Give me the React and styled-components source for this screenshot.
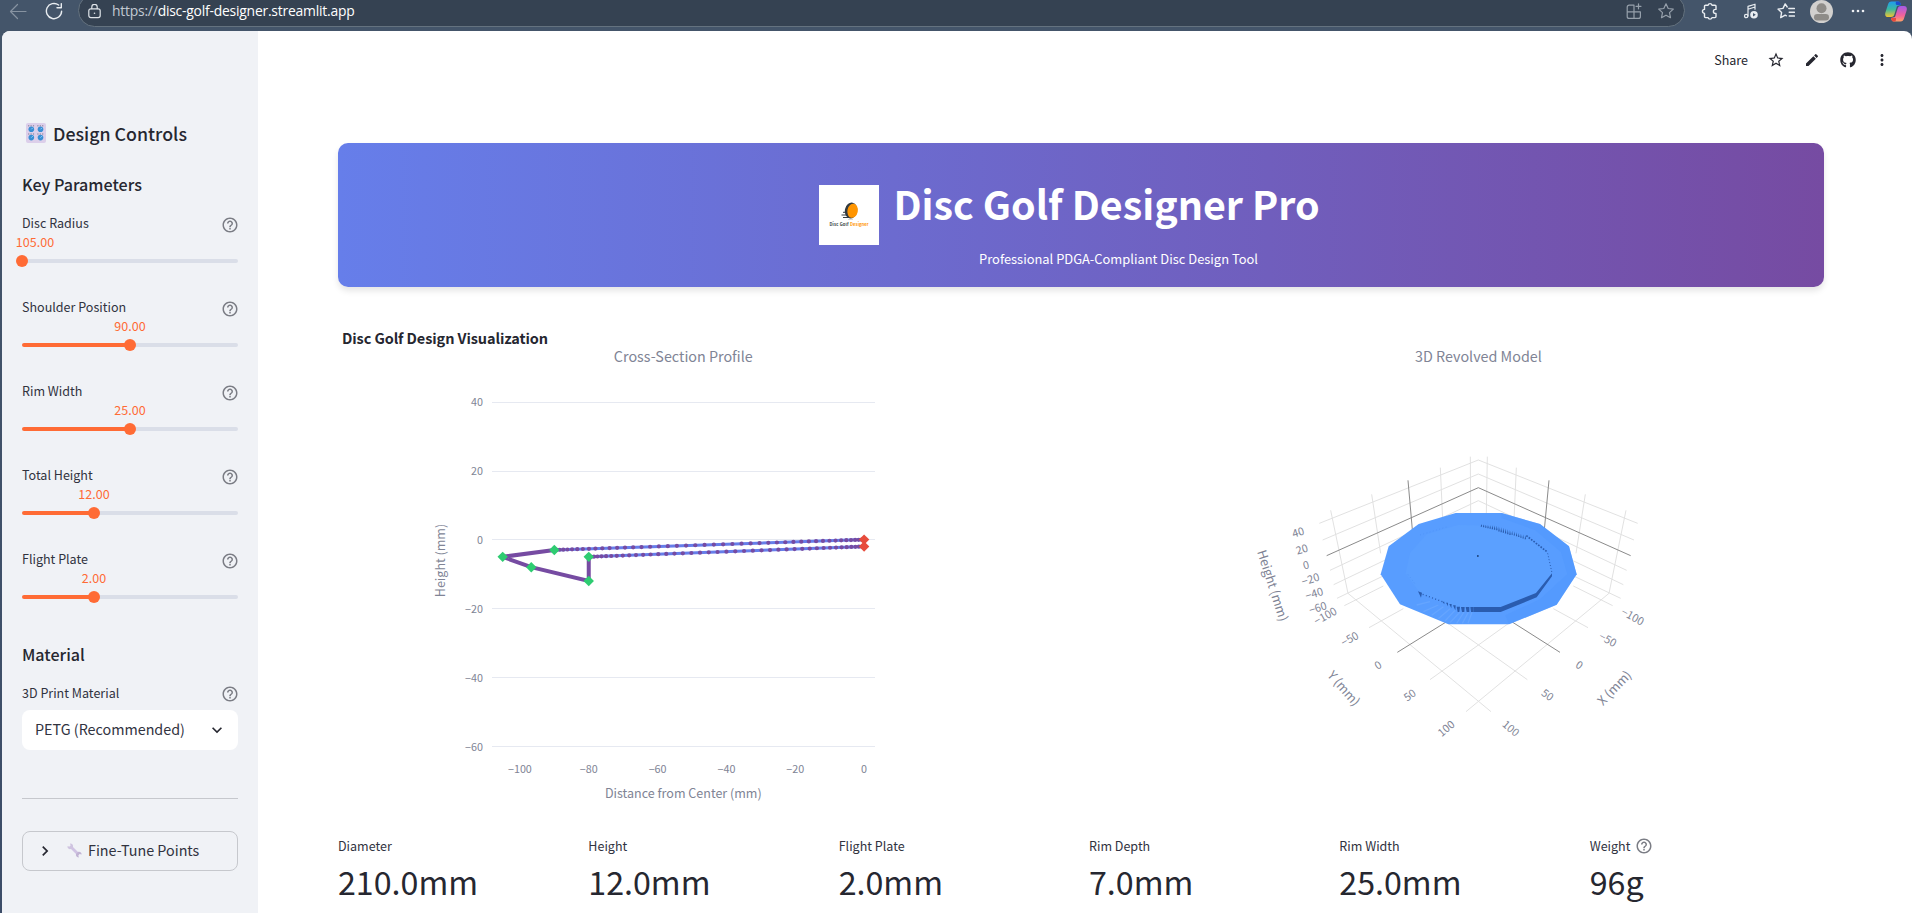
import React from "react";
import styled, { createGlobalStyle } from "styled-components";
import { FaGithub } from "react-icons/fa";
import { MdEdit, MdMoreVert, MdStarBorder, MdHelpOutline, MdExpandMore, MdChevronRight } from "react-icons/md";

const sans = `"Noto Sans CJK SC", "Open Sans", sans-serif`;

const GlobalStyle = createGlobalStyle`
  * { box-sizing: border-box; }
  html, body { margin: 0; height: 100%; overflow: hidden; background: #44556a; }
  body { font-family: ${sans}; color: #31333f; }
  svg { display: block; flex: none; }
`;

const Window = styled.div`
  width: 1912px;
  height: 913px;
  display: flex;
  flex-direction: column;
  overflow: hidden;
  background: linear-gradient(180deg, #44556a 0, #44556a 60px, #3c4d68 100%);
`;

/* ---------- browser chrome ---------- */
const Chrome = styled.div`
  height: 31px;
  flex: none;
  display: flex;
  align-items: flex-start;
  background: #44556a;
`;
const ChromeCell = styled.div`
  width: ${(p) => p.$w}px;
  height: 22px;
  margin-left: ${(p) => p.$ml || 0}px;
  flex: none;
  display: flex;
  align-items: center;
  justify-content: center;
`;
const AddressBar = styled.div`
  width: 1607px;
  height: 33px;
  margin-top: -6px;
  flex: none;
  display: flex;
  align-items: center;
  padding: 1px 9px 0 8px;
  border: 1px solid #64727f;
  border-radius: 17px;
  background: #354252;
`;
const Url = styled.div`
  flex: 1;
  margin-left: 10px;
  font: 13.9px/20px "Open Sans", sans-serif;
  letter-spacing: -0.22px;
  color: #fff;
  span { color: #c3cad2; }
`;
const ChromeDivider = styled.div`
  width: 1px;
  height: 16px;
  margin-top: 3px;
  background: #67788b;
`;
const Avatar = styled.div`
  width: 23px;
  height: 23px;
  border-radius: 50%;
  background: #d2d0ce;
  overflow: hidden;
  flex: none;
`;

/* ---------- page ---------- */
const Page = styled.div`
  flex: 1;
  min-height: 0;
  margin-left: 2px;
  display: flex;
  background: #fff;
  border-radius: 8px 8px 0 0;
  overflow: hidden;
`;
const Sidebar = styled.aside`
  width: 256px;
  flex: none;
  padding: 86px 20px 0;
  background: #f0f2f6;
`;
const PanelTitle = styled.h2`
  display: flex;
  align-items: center;
  gap: 7px;
  margin: 0 0 21px;
  padding-left: 4px;
  height: 32px;
  font-size: 17.8px;
  line-height: 32px;
  font-weight: 500;
  color: #262730;
`;
const SectionTitle = styled.h3`
  margin: 0;
  height: 28px;
  font-size: 16.1px;
  line-height: 28px;
  font-weight: 500;
  color: #262730;
`;
const FieldHead = styled.div`
  display: flex;
  align-items: center;
  justify-content: space-between;
  height: 20px;
  margin-top: ${(p) => p.$gap || 0}px;
  font-size: 12.54px;
  line-height: 20px;
  svg { margin: ${(p) => p.$drop}px -1px 0 0; }
`;
const SliderList = styled.div`
  height: 442px;
  padding-top: 15px;
`;
const SliderBox = styled.div`
  height: 84px;
`;
const SliderValue = styled.div`
  width: 60px;
  margin-left: ${(p) => 216 * p.$at - 30 + (p.$shift || 0)}px;
  height: 20px;
  margin-top: -1px;
  text-align: center;
  font-size: 12.54px;
  line-height: 20px;
  color: #ff6b35;
`;
const Track = styled.div`
  display: flex;
  align-items: center;
  height: 4px;
  margin-top: 7px;
  border-radius: 4px;
  background: linear-gradient(90deg, #ff6b35 ${(p) => p.$at * 100}%, #dadee8 ${(p) => p.$at * 100}%);
`;
const Thumb = styled.div`
  width: 12px;
  height: 12px;
  flex: none;
  margin-left: ${(p) => 216 * p.$at - 6}px;
  border-radius: 50%;
  background: #ff6b35;
`;
const Select = styled.div`
  display: flex;
  align-items: center;
  justify-content: space-between;
  height: 40px;
  margin-top: 7px;
  padding: 0 11px 2px 13px;
  border-radius: 8px;
  background: #fff;
  font-size: 14.33px;
  line-height: 24px;
  svg { margin-top: 1px; }
`;
const Rule = styled.hr`
  height: 1px;
  margin: 48px 0 32px;
  border: 0;
  background: #c6c8cd;
`;
const Expander = styled.div`
  display: flex;
  align-items: center;
  height: 40px;
  padding: 0 0 2px 12px;
  border: 1px solid #c6c8cd;
  border-radius: 8px;
  font-size: 14.33px;
  line-height: 24px;
  svg { margin-top: 1px; }
  svg + svg { margin: 0 6px 0 12px; }
`;
const Main = styled.main`
  flex: 1;
  min-width: 0;
`;
const Toolbar = styled.header`
  display: flex;
  align-items: center;
  justify-content: flex-end;
  height: 58px;
  padding-right: 5px;
  color: #262730;
`;
const Share = styled.span`
  font-size: 12.54px;
  line-height: 20px;
  margin-right: 19px;
`;
const ToolIcon = styled.span`
  display: flex;
  justify-content: center;
  width: ${(p) => p.$w}px;
`;
const Content = styled.div`
  width: 1486px;
  margin: 54px 0 0 80px;
`;
const Banner = styled.div`
  display: flex;
  align-items: center;
  justify-content: center;
  gap: 15px;
  height: 144px;
  padding-left: 50px;
  padding-right: 74px;
  border-radius: 10px;
  background: linear-gradient(90deg, #667eea 0%, #764ba2 100%);
  box-shadow: 0 4px 6px rgba(0, 0, 0, 0.1);
  color: #fff;
`;
const BannerText = styled.div`
  display: flex;
  flex-direction: column;
  align-items: center;
  width: 425px;
`;
const BannerTitle = styled.h1`
  margin: 17px 0 0;
  font-size: 39.4px;
  line-height: 54px;
  font-weight: 700;
  white-space: nowrap;
`;
const BannerSub = styled.p`
  margin: 17px 0 0 24px;
  font-size: 12.9px;
  line-height: 24px;
  white-space: nowrap;
`;
const Charts = styled.div`
  display: flex;
  height: 485px;
  margin-top: 33px;
`;
const Metrics = styled.div`
  display: grid;
  grid-template-columns: repeat(6, 1fr);
  gap: 16px;
  margin-top: 31px;
`;
const MetricLabel = styled.div`
  display: flex;
  align-items: center;
  gap: 5px;
  height: 20px;
  font-size: 12.54px;
  line-height: 20px;
`;
const MetricValue = styled.div`
  font-size: 32.2px;
  line-height: 50px;
  color: #262730;
`;

const Help = () => <MdHelpOutline size={18} color="#7b7d85" />;

const sliders = [
  ["Disc Radius", "105.00", 0, 13],
  ["Shoulder Position", "90.00", 0.5],
  ["Rim Width", "25.00", 0.5],
  ["Total Height", "12.00", 1 / 3],
  ["Flight Plate", "2.00", 1 / 3],
];

const metrics = [
  ["Diameter", "210.0mm"],
  ["Height", "12.0mm"],
  ["Flight Plate", "2.0mm"],
  ["Rim Depth", "7.0mm"],
  ["Rim Width", "25.0mm"],
  ["Weight", "96g", true],
];

/* ---------- cross-section chart ---------- */
const px = (mm) => 864.1 + mm * 3.442;
const py = (mm) => 539.6 - mm * 3.447;
const pts = (list) => list.map(([x, y]) => `${px(x)},${py(y)}`).join(" ");
const rim = [[-90, -3], [-105, -5], [-96.7, -8], [-80, -12], [-80, -5]];
const centre = [[0, 0], [0, -2]];

function Dots({ from, to, n }) {
  const k = 0.1;
  return Array.from({ length: n + 1 }, (_, i) => {
    const t = i / n;
    const s = 3 * t * (1 - t) * (1 - t) * k + 3 * t * t * (1 - t) * (1 - k) + t * t * t;
    return (
      <circle key={i} r="2.1" fill="#764ba2" cx={px(from[0] + (to[0] - from[0]) * s)} cy={py(from[1] + (to[1] - from[1]) * s)} />
    );
  });
}

const Diamond = ({ at: [x, y], fill }) => (
  <path d={`M${px(x)} ${py(y) - 5.2}l5.2 5.2-5.2 5.2-5.2-5.2z`} fill={fill} />
);

function CrossSection() {
  return (
    <svg width="743" height="485" viewBox="338 320 743 485" fontFamily={sans} fill="#808495">
      <text x="342" y="344.3" fontSize="14.5" fontWeight="700" fill="#262730" textLength="206">Disc Golf Design Visualization</text>
      <text x="683.3" y="362.3" fontSize="14.33" textAnchor="middle">Cross-Section Profile</text>
      {[40, 20, 0, -20, -40, -60].map((v) => (
        <g key={v}>
          <rect x="492" y={Math.floor(py(v) + 0.35)} width="383" height="1" fill="#e6e9f1" />
          <text x="483" y={py(v) + 4.6} fontSize="10.75" textAnchor="end">{String(v).replace("-", "−")}</text>
        </g>
      ))}
      {[-100, -80, -60, -40, -20, 0].map((v) => (
        <text key={v} x={px(v)} y="773" fontSize="10.75" textAnchor="middle">{String(v).replace("-", "−")}</text>
      ))}
      <text x="683.3" y="798" fontSize="12.54" textAnchor="middle">Distance from Center (mm)</text>
      <text transform="translate(444.5 560.5) rotate(-90)" fontSize="12.54" textAnchor="middle">Height (mm)</text>
      <g fill="none" strokeWidth="3" stroke="#667eea">
        <polyline points={pts([[-90, -3], [0, 0]])} />
        <polyline points={pts([[-80, -5], [0, -2]])} />
      </g>
      <polyline points={pts(rim)} fill="none" strokeWidth="4" stroke="#764ba2" />
      <Dots from={[-90, -3]} to={[0, 0]} n={45} />
      <Dots from={[-80, -5]} to={[0, -2]} n={42} />
      {rim.map((p) => <Diamond key={p} at={p} fill="#2ecc71" />)}
      {centre.map((p) => <Diamond key={p} at={p} fill="#e74c3c" />)}
    </svg>
  );
}

/* ---------- revolved model ---------- */
const lightGrid =
  "M268 280L745 90L1223 280M278 330L745 132L1212 330M300 421L745 212L1190 421M311 464L560 345M1180 464L930 345M321 505L480 428M1172 505L1010 428" +
  "M302 241L354 490M425 193L452 370M631 113L638 270M721 80L722 250M772 80L769 250M859 113L852 270M1066 193L1038 370M1188 241L1137 490" +
  "M354 490L783 845M1137 490L708 845M343 527L460 468M1148 527L1030 468M417 593L520 536M1074 593L970 536M640 570L892 749M850 570L600 749";
const darkGrid = "M290 377L745 173L1202 377M534 151L548 310M957 151L942 310M502 667L650 575M990 667L845 575";

const ticks3d = [
  ["40", 208, 318, -17], ["20", 219, 369, -17], ["0", 231, 416, -14], ["−20", 245, 459, -17], ["−40", 256, 502, -17], ["−60", 267, 545, -17],
  ["−100", 292, 568, -29], ["−50", 365, 637, -29], ["0", 450, 715, -32], ["50", 546, 805, -36], ["100", 656, 904, -40],
  ["−100", 1202, 570, 29], ["−50", 1128, 639, 29], ["0", 1042, 715, 32], ["50", 946, 804, 36], ["100", 835, 904, 40],
];

const backTeeth = Array.from({ length: 21 }, (_, i) => {
  const x = 754 + i * 6.6;
  const y = i < 7 ? 283 + i * 0.6 : 287 + (i - 7) * 2.2;
  return `M${x} ${y}l2 ${3 + Math.min(i, 8)}l0 ${i < 14 ? 4 : 1}l-4 0z`;
}).join("");

function Model3D() {
  return (
    <svg width="743" height="485" viewBox="1081 320 743 485" fontFamily={sans} fill="#808495">
      <text x="1478.4" y="362.3" fontSize="14.33" textAnchor="middle">3D Revolved Model</text>
      <g transform="translate(1230 430) scale(0.33333)">
        <path d={lightGrid} fill="none" stroke="#e0e0e0" strokeWidth="2.9" />
        <path d={darkGrid} fill="none" stroke="#868686" strokeWidth="2.9" />
        <path d="M677 249H815L930 282L1017 349L1040 433L980 524L837 583H655L510 523L452 433L476 349L566 282Z" fill="#589dff" />
        <path d="M815 249L930 282L1017 349L1040 433L980 524L837 583L826 556L930 508L1012 433L993 366L915 300L815 264Z" fill="#5097fd" opacity=".5" />
        <path d="M684 285L790 287L889 318L952 369L966 433L918 492L812 534H686L570 489L527 430L540 369L590 313Z" fill="#5ba0ff" />
        <path d="M560 525L600 515M580 545L625 525M605 556L640 530M625 566L660 536M645 573L675 541M660 578L690 546M680 580L702 546M697 580L715 547M714 580L726 547" stroke="#65a5ff" strokeWidth="4" fill="none" />
        <path d="M966 430L918 489L812 531H730V546H812L920 502L966 439Z" fill="#2a5caf" />
        <path d={backTeeth} fill="#2a5caf" />
        <path d="M889 317L952 366" stroke="#2a5caf" strokeWidth="5" strokeDasharray="5 4" />
        <path d="M953 370L966 429" stroke="#2a5caf" strokeWidth="3" strokeDasharray="3 6" />
        <path d="M564 484L576 488L573 503L569 494Z" fill="#2a5caf" />
        <path d="M578 493L640 516" stroke="#2a5caf" strokeWidth="4" strokeDasharray="3 7" />
        <path d="M637 515h6v8zM648 518h6v11zM658 522h7l-1 13zM669 526h8l-1 15zM680 530h10l-2 16h-5zM693 531h11l-1 15h-7zM707 531h11v15h-8zM721 531h9v15h-7z" fill="#2a5caf" />
        <path d="M554 460L530 428M570 315L650 291" stroke="#4c90f4" strokeWidth="2" strokeDasharray="3 7" />
        <rect x="741" y="375" width="5" height="6" fill="#24508f" />
        <g textAnchor="middle">
          {ticks3d.map(([t, x, y, r]) => (
            <text key={`${x}${y}`} transform={`translate(${x} ${y}) rotate(${r})`} fontSize="32.5">{t}</text>
          ))}
          <g fontSize="38">
            <text transform="translate(115 471) rotate(72)">Height (mm)</text>
            <text transform="translate(331 784) rotate(49)">Y (mm)</text>
            <text transform="translate(1163 783) rotate(-46)">X (mm)</text>
          </g>
        </g>
      </g>
    </svg>
  );
}

/* ---------- drawings ---------- */
const KnobsIcon = () => (
  <svg width="20" height="20" viewBox="0 0 20 20">
    <rect width="20" height="20" rx="2" fill="#dccfea" />
    {[[5.3, 6.3], [14.5, 6.3], [5.3, 14.6], [14.5, 14.6]].map(([x, y]) => (
      <g key={`${x}${y}`}>
        <path d={`M${x - 3.2} ${y - 3.6}h6.4`} stroke="#9c94ae" strokeWidth="1.4" strokeDasharray="1.2 1.2" />
        <circle cx={x} cy={y} r="2.8" fill="#3a8fd4" />
        <path d={`M${x} ${y}l1.5 -1.5`} stroke="#8fd0ff" strokeWidth="1" />
      </g>
    ))}
  </svg>
);

const WrenchIcon = () => (
  <svg width="15" height="15" viewBox="0 0 15 15">
    <path d="M3.5 3.5L11.5 11.5" stroke="#d0c3e3" strokeWidth="2.8" />
    <path d="M0.4 3.2L2.6 3.6L3.6 2.4L3 .4C5 .2 6.600 2 6 4L4 6C2 6.600.4 5.200.4 3.200Z" fill="#cfc4e0" />
    <path d="M14.6 11.4L12.600 11L11.400 12.200L11.800 14.400C9.800 14.600 8.400 12.800 9 11L11 9C13 8.400 14.600 9.600 14.600 11.400Z" fill="#c1b4d4" />
  </svg>
);

const Logo = () => (
  <svg width="60" height="60" viewBox="0 0 60 60">
    <rect width="60" height="60" fill="#fff" />
    <ellipse cx="32" cy="25.5" rx="6.2" ry="8" fill="#333b40" transform="rotate(12 32 25.5)" />
    <ellipse cx="33.6" cy="25.8" rx="5.2" ry="7.1" fill="#ff9500" transform="rotate(12 33.6 25.8)" />
    <path d="M24 27.3h4M22.5 30h6M24 32.5h6" stroke="#333b40" strokeWidth="1" />
    <path d="M29 34.5h5" stroke="#c9c9c9" strokeWidth=".7" />
    <text x="10.5" y="40.9" fontSize="4.1" fontWeight="700" fill="#333b40" textLength="19">Disc Golf</text>
    <text x="31" y="40.9" fontSize="4.1" fontWeight="700" fill="#ff9500" textLength="18.5">Designer</text>
  </svg>
);

const Line = ({ w = 18, color = "#e9edf1", sw = 1.2, children }) => (
  <svg width={w} height={w} viewBox={`0 0 ${w} ${w}`} fill="none" stroke={color} strokeWidth={sw} strokeLinecap="round" strokeLinejoin="round">
    {children}
  </svg>
);
const starPath = "M9 1.8l2.2 4.7 5.1.6-3.8 3.5 1 5.1L9 13.2l-4.5 2.5 1-5.1L1.7 7.1l5.1-.6z";

function BrowserChrome() {
  return (
    <Chrome>
      <ChromeCell $w={36}><Line color="#8793a1"><path d="M17 9.5H1.5M8.5 2.5l-7 7 7 7" /></Line></ChromeCell>
      <ChromeCell $w={36}><Line sw={1.4}><path d="M16.6 9.2A7.6 7.6 0 1 1 13.6 3M16.3 1.6v4.2h-4.3" /></Line></ChromeCell>
      <ChromeCell $w={6} />
      <AddressBar>
        <Line color="#dfe4e9" w={15} sw={1.2}>
          <rect x="1.8" y="4.8" width="11.4" height="8.8" rx="2" />
          <path d="M4.8 4.6V3a2.7 2.7 0 0 1 5.4 0v1.6" />
          <circle cx="7.5" cy="9.2" r=".8" fill="#dfe4e9" stroke="none" />
        </Line>
        <Url><span>https://</span>disc-golf-designer.streamlit.app</Url>
        <Line color="#96a0ab">
          <path d="M9 3.2H4.2a2 2 0 0 0-2 2v9.2a2 2 0 0 0 2 2h9.2a2 2 0 0 0 2-2V9.8H2.2M9 3.2v13.2M13.5 1.8v5M11 4.3h5" />
        </Line>
        <ChromeCell $w={18} $ml={14}><Line color="#96a0ab"><path d={starPath} /></Line></ChromeCell>
      </AddressBar>
      <ChromeCell $w={37} $ml={6}>
        <Line sw={1.4}>
          <path d="M4.5 3.2h2.6a2 2 0 0 1 3.9 0h3a1 1 0 0 1 1 1v3.2h-.6a2 2 0 0 0 0 4h.6v3.2a1 1 0 0 1-1 1h-3a2 2 0 0 1-3.9 0H4.5a1 1 0 0 1-1-1v-3.2a2 2 0 0 1 0-4V4.2a1 1 0 0 1 1-1z" />
        </Line>
      </ChromeCell>
      <ChromeDivider />
      <ChromeCell $w={35} $ml={5}>
        <Line>
          <circle cx="4.2" cy="14" r="1.7" />
          <path d="M6 14V4.4l7-2.2v5M6 7.2l7-2.2" />
          <circle cx="12" cy="12.8" r="3.8" fill="#e9edf1" stroke="none" />
          <path d="M11 11v3.6l2.8-1.8z" fill="#44556a" stroke="none" />
        </Line>
      </ChromeCell>
      <ChromeCell $w={35}>
        <Line sw={1.4}><path d="M11.8 6.5h5.6M12.2 10.2h5.2M12.2 14h5.2M10.2 5L8.2 1.9 6 6.4l-5 .7 3.6 3.5-.9 5 4.5-2.4 1.2.6" /></Line>
      </ChromeCell>
      <ChromeCell $w={36}>
        <Avatar>
          <svg width="23" height="23" viewBox="0 0 23 23" fill="#8f8c88"><circle cx="11.5" cy="8.3" r="5" /><rect x="4" y="14" width="15" height="6.5" rx="3.2" /></svg>
        </Avatar>
      </ChromeCell>
      <ChromeCell $w={38}>
        <svg width="14" height="4" fill="#eef1f4"><circle cx="2" cy="2" r="1.3" /><circle cx="7" cy="2" r="1.3" /><circle cx="12" cy="2" r="1.3" /></svg>
      </ChromeCell>
      <ChromeCell $w={37}>
        <svg width="22" height="21" viewBox="0 0 22 21">
          <defs>
            <linearGradient id="cpA" x1="0" y1="0" x2="0" y2="1"><stop offset="0" stopColor="#1f9cf0" /><stop offset=".5" stopColor="#3bb9a0" /><stop offset="1" stopColor="#f3c52f" /></linearGradient>
            <linearGradient id="cpB" x1="0" y1="0" x2="0" y2="1"><stop offset="0" stopColor="#a35be8" /><stop offset=".6" stopColor="#f0629c" /><stop offset="1" stopColor="#ffa168" /></linearGradient>
          </defs>
          <path d="M6.5 0.5H13C15 .5 15.5 2 16 4L12 5L9.5 13C9 15 8 16 6 16H3C.5 16-.3 14 .4 11.5L3 3.5C3.6 1.5 4.5.5 6.5.5Z" fill="url(#cpA)" />
          <path d="M11 0.5h2.5c1.500 0 2 1.500 2.500 3.500h-4c-1.500 0-1.500-2-1-3.500z" fill="#1a4fcf" />
          <path d="M15.5 20.5H9C7 20.5 6.5 19 6 17L10 16L12.5 8C13 6 14 5 16 5H19C21.5 5 22.3 7 21.6 9.5L19 17.5C18.4 19.5 17.5 20.5 15.5 20.5Z" fill="url(#cpB)" />
          <path d="M10 20.5H8.5C7 20.5 6.5 19 6 17h5c0 2 0 3-1 3.5z" fill="#e8493e" />
        </svg>
      </ChromeCell>
    </Chrome>
  );
}

export default function App() {
  return (
    <Window>
      <GlobalStyle />
      <BrowserChrome />
      <Page>
        <Sidebar>
          <PanelTitle><KnobsIcon />Design Controls</PanelTitle>
          <SectionTitle>Key Parameters</SectionTitle>
          <SliderList>
            {sliders.map(([label, value, at, shift]) => (
              <SliderBox key={label}>
                <FieldHead $drop={4}>{label}<Help /></FieldHead>
                <SliderValue $at={at} $shift={shift}>{value}</SliderValue>
                <Track $at={at}><Thumb $at={at} /></Track>
              </SliderBox>
            ))}
          </SliderList>
          <SectionTitle>Material</SectionTitle>
          <FieldHead $gap={15} $drop={2}>3D Print Material<Help /></FieldHead>
          <Select>PETG (Recommended)<MdExpandMore size={20} color="#262730" /></Select>
          <Rule />
          <Expander><MdChevronRight size={20} color="#262730" /><WrenchIcon />Fine-Tune Points</Expander>
        </Sidebar>
        <Main>
          <Toolbar>
            <Share>Share</Share>
            <ToolIcon $w={18}><MdStarBorder size={18} /></ToolIcon>
            <ToolIcon $w={54}><MdEdit size={16} /></ToolIcon>
            <ToolIcon $w={18}><FaGithub size={16} /></ToolIcon>
            <ToolIcon $w={50}><MdMoreVert size={18} /></ToolIcon>
          </Toolbar>
          <Content>
            <Banner>
              <Logo />
              <BannerText>
                <BannerTitle>Disc Golf Designer Pro</BannerTitle>
                <BannerSub>Professional PDGA-Compliant Disc Design Tool</BannerSub>
              </BannerText>
            </Banner>
            <Charts>
              <CrossSection />
              <Model3D />
            </Charts>
            <Metrics>
              {metrics.map(([label, value, help]) => (
                <div key={label}>
                  <MetricLabel>{label}{help && <Help />}</MetricLabel>
                  <MetricValue>{value}</MetricValue>
                </div>
              ))}
            </Metrics>
          </Content>
        </Main>
      </Page>
    </Window>
  );
}
